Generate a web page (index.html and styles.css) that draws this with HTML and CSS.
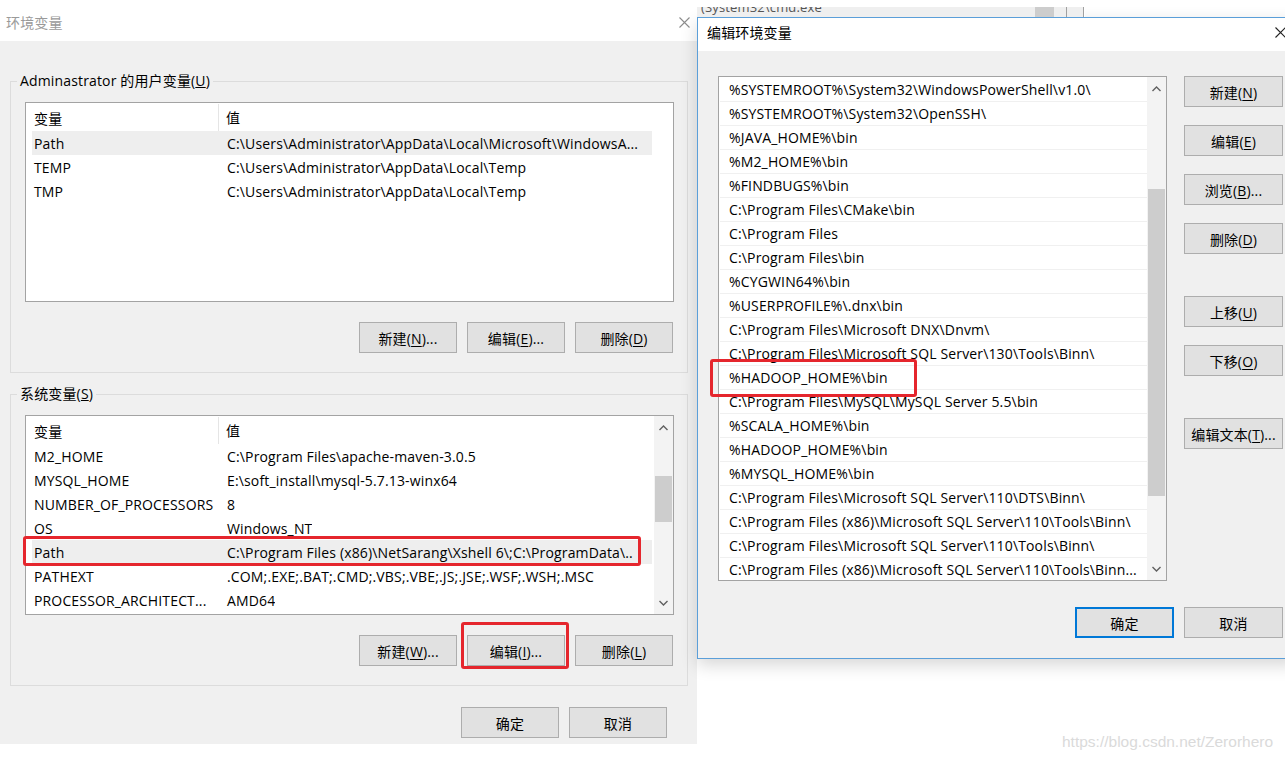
FILE: index.html
```html
<!DOCTYPE html>
<html lang="zh-CN">
<head>
<meta charset="UTF-8">
<title>环境变量</title>
<link rel="stylesheet" href="styles.css">
</head>
<body>
<!-- 后面那个 cmd 窗口露出的一条 -->
<div class="behind">
    <span class="behind-text">(System32\cmd.exe</span>
    <span class="behind-thumb"></span>
    <span class="behind-line l1"></span>
    <span class="behind-line l2"></span>
</div>

<div class="desk">
    <!-- 环境变量 -->
    <div class="win env">
        <div class="titlebar">
            <span class="title">环境变量</span>
            <svg class="close" width="11" height="11" viewBox="0 0 11 11"><path d="M0.5 0.5L10.5 10.5M10.5 0.5L0.5 10.5" stroke="#8c8c8c" stroke-width="1.1" fill="none"/></svg>
        </div>
        <div class="body">
            <fieldset class="group">
                <legend>Adminastrator 的用户变量(<u>U</u>)</legend>
                <div class="lv">
                    <div class="lv-main">
                        <div class="lv-head"><div class="c1">变量</div><div class="c2">值</div></div>
                        <div class="lv-row sel"><div class="c1">Path</div><div class="c2">C:\Users\Administrator\AppData\Local\Microsoft\WindowsA...</div></div>
                        <div class="lv-row"><div class="c1">TEMP</div><div class="c2">C:\Users\Administrator\AppData\Local\Temp</div></div>
                        <div class="lv-row"><div class="c1">TMP</div><div class="c2">C:\Users\Administrator\AppData\Local\Temp</div></div>
                    </div>
                </div>
                <div class="btnrow">
                    <button class="btn">新建(<u>N</u>)...</button>
                    <button class="btn">编辑(<u>E</u>)...</button>
                    <button class="btn">删除(<u>D</u>)</button>
                </div>
            </fieldset>

            <fieldset class="group sys">
                <legend>系统变量(<u>S</u>)</legend>
                <div class="lv">
                    <div class="lv-main">
                        <div class="lv-head"><div class="c1">变量</div><div class="c2">值</div></div>
                        <div class="lv-row"><div class="c1">M2_HOME</div><div class="c2">C:\Program Files\apache-maven-3.0.5</div></div>
                        <div class="lv-row"><div class="c1">MYSQL_HOME</div><div class="c2">E:\soft_install\mysql-5.7.13-winx64</div></div>
                        <div class="lv-row"><div class="c1">NUMBER_OF_PROCESSORS</div><div class="c2">8</div></div>
                        <div class="lv-row"><div class="c1">OS</div><div class="c2">Windows_NT</div></div>
                        <div class="lv-row sel marked"><div class="c1">Path</div><div class="c2">C:\Program Files (x86)\NetSarang\Xshell 6\;C:\ProgramData\..</div></div>
                        <div class="lv-row"><div class="c1">PATHEXT</div><div class="c2">.COM;.EXE;.BAT;.CMD;.VBS;.VBE;.JS;.JSE;.WSF;.WSH;.MSC</div></div>
                        <div class="lv-row"><div class="c1">PROCESSOR_ARCHITECT...</div><div class="c2">AMD64</div></div>
                    </div>
                    <div class="vscroll short">
                        <svg class="arr" width="17" height="12" viewBox="0 0 17 12"><path d="M4.5 8L8.5 4L12.5 8" stroke="#606060" stroke-width="1.4" fill="none"/></svg>
                        <div class="thumb"></div>
                        <svg class="arr down" width="17" height="12" viewBox="0 0 17 12"><path d="M4.5 4L8.5 8L12.5 4" stroke="#606060" stroke-width="1.4" fill="none"/></svg>
                    </div>
                </div>
                <div class="btnrow">
                    <button class="btn">新建(<u>W</u>)...</button>
                    <button class="btn marked">编辑(<u>I</u>)...</button>
                    <button class="btn">删除(<u>L</u>)</button>
                </div>
            </fieldset>

            <div class="btnrow foot">
                <button class="btn">确定</button>
                <button class="btn">取消</button>
            </div>
        </div>
    </div>

    <!-- 编辑环境变量 -->
    <div class="win edit">
        <div class="titlebar">
            <span class="title">编辑环境变量</span>
            <svg class="close" width="11" height="11" viewBox="0 0 11 11"><path d="M0.5 0.5L10.5 10.5M10.5 0.5L0.5 10.5" stroke="#222" stroke-width="1.1" fill="none"/></svg>
        </div>
        <div class="body">
            <div class="main">
                <div class="list">
                    <div class="items">
                        <div class="li">%SYSTEMROOT%\System32\WindowsPowerShell\v1.0\</div>
                        <div class="li">%SYSTEMROOT%\System32\OpenSSH\</div>
                        <div class="li">%JAVA_HOME%\bin</div>
                        <div class="li">%M2_HOME%\bin</div>
                        <div class="li">%FINDBUGS%\bin</div>
                        <div class="li">C:\Program Files\CMake\bin</div>
                        <div class="li">C:\Program Files</div>
                        <div class="li">C:\Program Files\bin</div>
                        <div class="li">%CYGWIN64%\bin</div>
                        <div class="li">%USERPROFILE%\.dnx\bin</div>
                        <div class="li">C:\Program Files\Microsoft DNX\Dnvm\</div>
                        <div class="li">C:\Program Files\Microsoft SQL Server\130\Tools\Binn\</div>
                        <div class="li marked">%HADOOP_HOME%\bin</div>
                        <div class="li">C:\Program Files\MySQL\MySQL Server 5.5\bin</div>
                        <div class="li">%SCALA_HOME%\bin</div>
                        <div class="li">%HADOOP_HOME%\bin</div>
                        <div class="li">%MYSQL_HOME%\bin</div>
                        <div class="li">C:\Program Files\Microsoft SQL Server\110\DTS\Binn\</div>
                        <div class="li">C:\Program Files (x86)\Microsoft SQL Server\110\Tools\Binn\</div>
                        <div class="li">C:\Program Files\Microsoft SQL Server\110\Tools\Binn\</div>
                        <div class="li">C:\Program Files (x86)\Microsoft SQL Server\110\Tools\Binn...</div>
                    </div>
                    <div class="vscroll long">
                        <svg class="arr" width="17" height="12" viewBox="0 0 17 12"><path d="M4.5 8L8.5 4L12.5 8" stroke="#606060" stroke-width="1.4" fill="none"/></svg>
                        <div class="thumb"></div>
                        <svg class="arr down" width="17" height="12" viewBox="0 0 17 12"><path d="M4.5 4L8.5 8L12.5 4" stroke="#606060" stroke-width="1.4" fill="none"/></svg>
                    </div>
                </div>
                <div class="side">
                    <button class="btn">新建(<u>N</u>)</button>
                    <button class="btn">编辑(<u>E</u>)</button>
                    <button class="btn">浏览(<u>B</u>)...</button>
                    <button class="btn">删除(<u>D</u>)</button>
                    <button class="btn far">上移(<u>U</u>)</button>
                    <button class="btn">下移(<u>O</u>)</button>
                    <button class="btn far">编辑文本(<u>T</u>)...</button>
                </div>
            </div>
            <div class="btnrow foot">
                <button class="btn default">确定</button>
                <button class="btn">取消</button>
            </div>
        </div>
    </div>
</div>

<div class="watermark">https://blog.csdn.net/Zerorhero</div>
</body>
</html>
```

FILE: styles.css
```css
body {margin:0;width:1285px;height:762px;overflow:hidden;position:relative;background:#fff;color:#000;font-family:"Open Sans","Noto Sans CJK SC",sans-serif;font-size:14px;letter-spacing:0.15px;}
.desk {display:flex;align-items:flex-start;}
.win {flex:none;box-sizing:border-box;}

/* title bars */
.titlebar {display:flex;align-items:center;justify-content:space-between;background:#fff;box-sizing:border-box;}
.title {font-size:14px;}
.close {display:block;}

/* buttons */
.btn {width:98px;height:31px;box-sizing:border-box;margin:0;padding:0;background:#e1e1e1;border:1px solid #adadad;font-family:inherit;font-size:14px;letter-spacing:inherit;color:#000;position:relative;}
.btn u {text-underline-offset:2px;}
.btnrow {display:flex;justify-content:flex-end;gap:10px;}
.marked {position:relative;}
.marked::after {content:"";position:absolute;box-sizing:border-box;border:3px solid #e5262d;border-radius:3px;pointer-events:none;}

/* 左边窗口 */
.env {width:697px;}
.env .titlebar {height:41px;padding:3px 7px 0 6px;}
.env .title {color:#9a9a9a;}
.env .body {height:703px;box-sizing:border-box;background:#f0f0f0;padding:30px 9px 0 10px;}
.group {margin:0;padding:11px 13px 19px 14px;border:1px solid #dcdcdc;min-width:0;}
.group legend {margin-left:-8px;padding:0 3px;line-height:20px;}
.group.sys {margin-top:11px;}
.group .btnrow {margin-top:20px;margin-right:1px;}
.env .foot {margin-top:21px;margin-right:21px;}

.lv {height:200px;box-sizing:border-box;border:1px solid #a3a3a3;background:#fff;display:flex;}
.lv-main {flex:1;min-width:0;}
.lv-head {display:flex;height:28px;}
.lv-head .c1 {width:193px;flex:none;box-sizing:border-box;padding-left:8px;border-right:1px solid #e5e5e5;display:flex;align-items:center;margin-top:1px;}
.lv-head .c2 {padding-left:7px;display:flex;align-items:center;}
.lv-row {display:flex;align-items:center;height:24px;width:620px;margin-left:6px;white-space:nowrap;}
.lv-row .c1 {width:187px;flex:none;box-sizing:border-box;padding-left:2px;overflow:hidden;}
.lv-row .c2 {padding-left:8px;overflow:hidden;}
.lv-row.sel {background:#eeeeee;}
.lv-row.marked::after {left:-9px;top:-4px;width:618px;height:30px;}
.btn.marked::after {left:-7px;top:-14px;width:108px;height:47px;}

/* 滚动条 */
.vscroll {flex:none;width:19px;background:#f3f3f3;position:relative;}
.vscroll .arr {position:absolute;left:1px;top:6px;}
.vscroll .arr.down {top:auto;bottom:5px;}
.vscroll .thumb {position:absolute;left:1px;right:1px;background:#cdcdcd;}
.vscroll.short {margin-left:1px;}
.vscroll.short .thumb {top:60px;height:46px;}
.vscroll.long .thumb {top:112px;height:307px;}

/* 右边窗口 */
.edit {width:600px;margin-top:17px;border:1px solid #5b9fd9;border-right:none;box-shadow:0 6px 16px rgba(0,0,0,0.16);}
.edit .titlebar {height:33px;padding:0 11px 5px 9px;}
.edit .body {background:#f0f0f0;padding:25px 0 20px 20px;}
.main {display:flex;align-items:flex-start;}
.list {width:449px;height:505px;box-sizing:border-box;border:1px solid #a3a3a3;background:#fff;display:flex;}
.items {flex:1;padding-top:1px;}
.li {height:24px;box-sizing:border-box;border-bottom:1px solid #f0f0f0;padding-left:9px;line-height:23px;white-space:nowrap;overflow:hidden;margin-left:1px;}
.li:last-child {height:22px;border-bottom:none;}
.li.marked {overflow:visible;}
.li.marked::after {left:-10px;top:-7px;width:207px;height:38px;}
.side {display:flex;flex-direction:column;margin-left:17px;}
.side .btn {width:99px;margin-top:18px;}
.side .btn:first-child {margin-top:0;}
.side .btn.far {margin-top:42px;}
.edit .foot {width:565px;margin-top:26px;}
.edit .foot .btn {width:99px;}
.btn.default {border:2px solid #0078d7;}

/* 背后窗口 */
.behind {position:absolute;left:697px;top:7px;width:388px;height:10px;overflow:hidden;background:#efefef;}
.behind-text {position:absolute;left:4px;top:-9px;font-size:13px;color:#555;}
.behind-thumb {position:absolute;left:338px;top:0;width:19px;height:10px;background:#cdcdcd;}
.behind-line {position:absolute;top:0;width:1px;height:10px;background:#a0a0a0;}
.behind-line.l1 {left:369px;}
.behind-line.l2 {left:386px;box-shadow:1px 0 0 #fff;}

.watermark {position:absolute;left:1062px;top:733px;font-family:"Liberation Sans",Arial,sans-serif;font-size:15.5px;letter-spacing:0;color:#dadada;}
```
